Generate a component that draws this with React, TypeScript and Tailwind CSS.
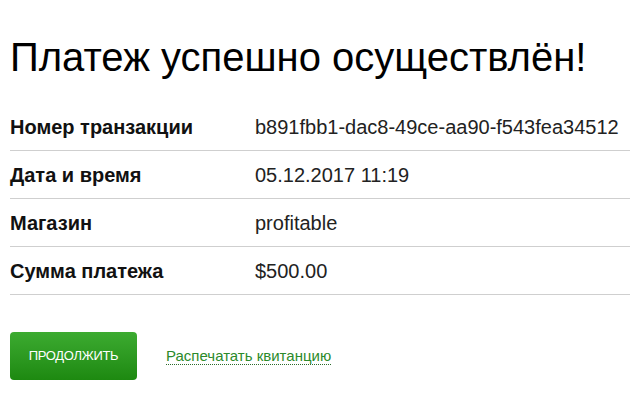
import React from "react";

const rows: [string, string][] = [
  ["Номер транзакции", "b891fbb1-dac8-49ce-aa90-f543fea34512"],
  ["Дата и время", "05.12.2017 11:19"],
  ["Магазин", "profitable"],
  ["Сумма платежа", "$500.00"],
];

export default function App() {
  return (
    <div
      className="w-[636px] h-[410px] bg-white text-[#111] overflow-hidden"
      style={{ fontFamily: '"Liberation Sans", Arial, sans-serif' }}
    >
      <div className="pl-[10px] pr-[6px]">
        <h1 className="pt-[33px] text-[40px] leading-[48px] font-normal text-black">
          Платеж успешно осуществлён!
        </h1>
        <div className="mt-[22px]">
          {rows.map(([k, v]) => (
            <div key={k} className="flex h-[48px] items-center border-b border-[#cfcfcf]">
              <div className="w-[245px] text-[20px] font-bold text-[#111]">{k}</div>
              <div className="text-[20px] text-[#222]">{v}</div>
            </div>
          ))}
        </div>
        <div className="mt-[37px] flex items-center">
          <button className="w-[127px] h-[48px] rounded-[4px] bg-gradient-to-b from-[#3cab30] to-[#1d8910] text-white text-[13px] tracking-[-0.3px] uppercase">
            Продолжить
          </button>
          <a className="ml-[29px] text-[15px] text-[#2b8a2b] border-b border-dotted border-[#2b6a2b] leading-[17px]">
            Распечатать квитанцию
          </a>
        </div>
      </div>
    </div>
  );
}
